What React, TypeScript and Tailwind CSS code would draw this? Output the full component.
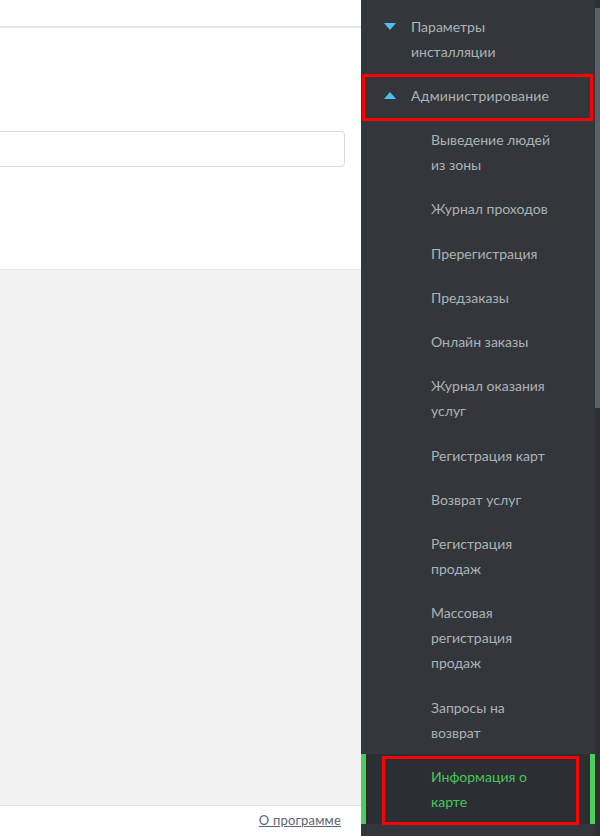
import React from "react";

type Item = { label: string[]; active?: boolean };

const subItems: Item[] = [
  { label: ["Выведение людей", "из зоны"] },
  { label: ["Журнал проходов"] },
  { label: ["Пререгистрация"] },
  { label: ["Предзаказы"] },
  { label: ["Онлайн заказы"] },
  { label: ["Журнал оказания", "услуг"] },
  { label: ["Регистрация карт"] },
  { label: ["Возврат услуг"] },
  { label: ["Регистрация", "продаж"] },
  { label: ["Массовая", "регистрация", "продаж"] },
  { label: ["Запросы на", "возврат"] },
  { label: ["Информация о", "карте"], active: true },
];

function Caret({ up }: { up?: boolean }) {
  return (
    <svg width="12" height="7" viewBox="0 0 12 7" className="shrink-0">
      {up ? <polygon points="0,7 6,0 12,7" fill="#4dbff0" /> : <polygon points="0,0 12,0 6,7" fill="#4dbff0" />}
    </svg>
  );
}

export default function App() {
  return (
    <div
      className="flex w-[600px] h-[836px] overflow-hidden bg-white"
      style={{ fontFamily: "Lato, 'Open Sans', sans-serif" }}
    >
      {/* main area */}
      <div className="flex flex-col w-[361px] shrink-0">
        <div className="h-[28px] border-b-2 border-[#e4e6e9] bg-white shrink-0" />
        <div className="h-[242px] bg-white border-b border-[#e6e6e6] shrink-0 pt-[103px] pr-[16px]">
          <div className="h-[36px] -ml-[10px] rounded-[4px] border border-[#dcdcdc] bg-white" />
        </div>
        <div className="flex-1 bg-[#f2f2f2]" />
        <div className="h-[31px] shrink-0 border-t border-[#e3e3e3] bg-white flex items-center justify-end pr-[20px]">
          <a href="#" className="text-[13px] tracking-[0.2px] text-[#5c6470] underline">
            О программе
          </a>
        </div>
      </div>

      {/* sidebar */}
      <div className="relative flex-1 bg-[#33373b] text-[14px] leading-[25px] text-[#aeb2b6]">
        <div className="pt-[4px] pr-[5px]">
          <div className="flex items-start gap-[15px] pl-[23px] pt-[9.5px] pb-[9.75px]">
            <div className="h-[25px] flex items-center">
              <Caret />
            </div>
            <div>
              <div>Параметры</div>
              <div>инсталляции</div>
            </div>
          </div>
          <div className="flex items-start gap-[15px] pl-[23px] pt-[9.5px] pb-[9.75px]">
            <div className="h-[25px] flex items-center">
              <Caret up />
            </div>
            <div className="tracking-[0.2px]">Администрирование</div>
          </div>
          {subItems.map((item) => (
            <div
              key={item.label.join(" ")}
              className={
                item.active
                  ? "pl-[65px] pt-[9.5px] pb-[9.75px] bg-[#2b2f33] border-x-[5px] border-[#4ccd5c] text-[#4cc45c]"
                  : "pl-[70px] pt-[9.5px] pb-[9.75px]"
              }
            >
              {item.label.map((l) => (
                <div key={l}>{l}</div>
              ))}
            </div>
          ))}
        </div>

        {/* scrollbar */}
        <div className="absolute top-0 right-0 w-[5px] h-full bg-[#2d3135]">
          <div className="mt-[8px] h-[400px] bg-[#5b6066]" />
        </div>

        {/* annotation boxes */}
        <div className="absolute left-[1px] top-[74px] w-[231px] h-[47px] border-[3px] border-[#ff0000]" />
        <div className="absolute left-[21px] top-[756px] w-[197px] h-[69px] border-[3px] border-[#ff0000]" />
      </div>
    </div>
  );
}
